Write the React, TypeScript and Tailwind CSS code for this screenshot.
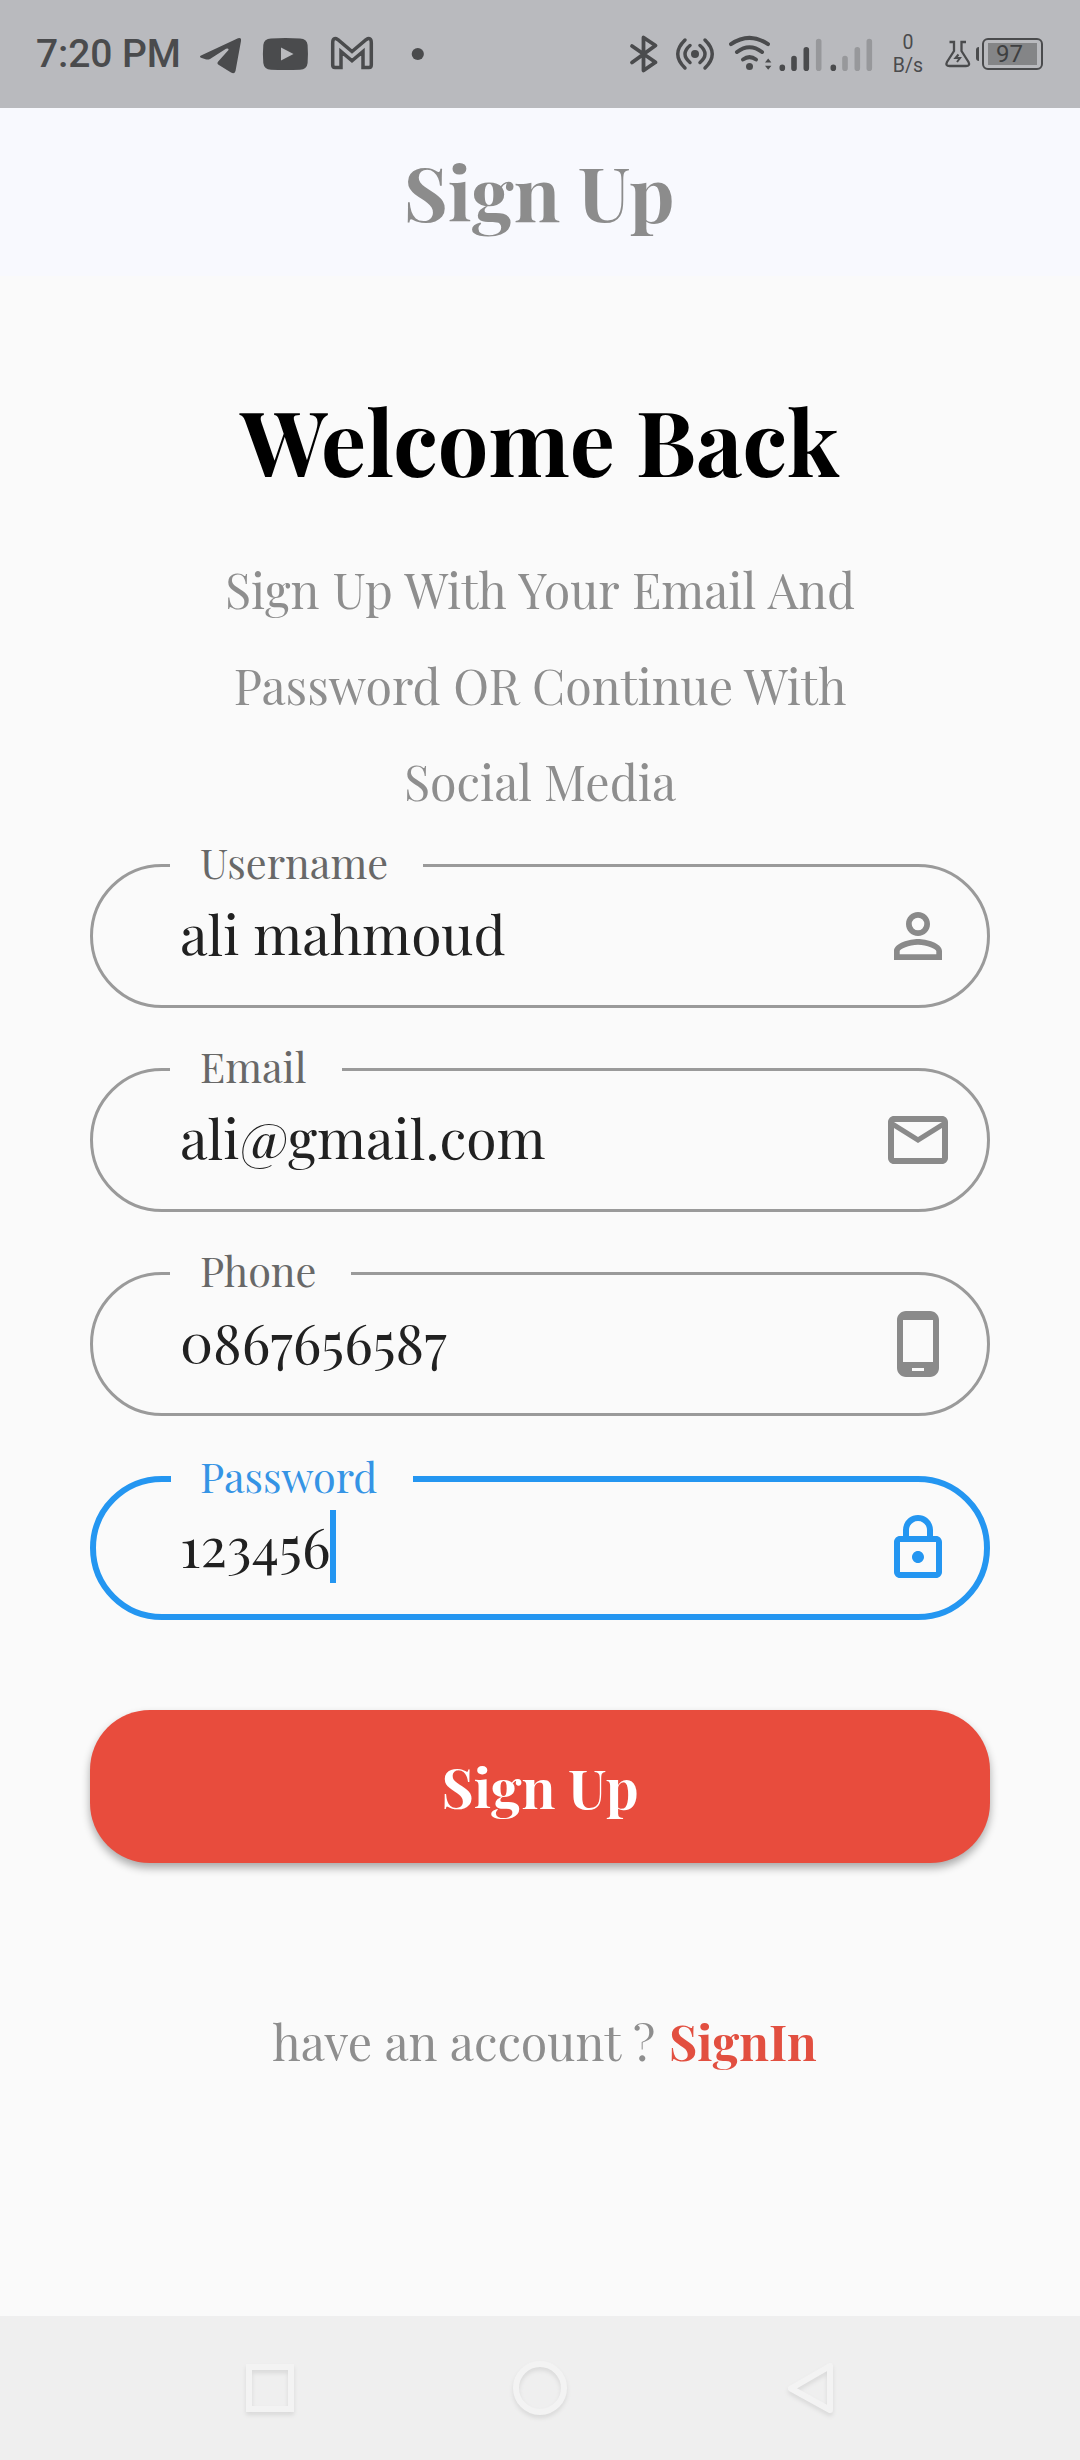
import type { ReactNode } from "react";

const SERIF = "font-['Playfair_Display','Liberation_Serif',serif]";

/* Status bar artwork: each strip is a full-height slice of the bar. */
function Strip({ x, w, className, children }: { x: number; w: number; className: string; children: ReactNode }) {
  return (
    <svg viewBox={`${x} 0 ${w} 108`} className={`h-[108px] shrink-0 ${className}`} fill="none">
      {children}
    </svg>
  );
}

const INK = "#4a4b4d";
const FAINT = "#97989b";

function StatusBar() {
  return (
    <div className="flex h-[108px] items-center bg-[#b9babe] font-[Roboto,sans-serif] text-[#4a4b4d]">
      <span className="ml-9 w-[160px] whitespace-nowrap text-[39px] leading-[110px] font-medium tracking-[-0.1px]">7:20 PM</span>
      <Strip x={196} w={54} className="w-[54px]">
        <path
          d="M201 55.5 238 38.2Q241.600 37 241 41L235.500 71Q234.500 74.500 231 72.500L218.500 64.800Q216.500 63.300 218.200 61.500L228.500 50Q229 47.700 226 48.800L210 59Q208 60 205.500 59.300L201 57.800Q199 56.700 201 55.500Z"
          fill={INK}
        />
      </Strip>
      <Strip x={250} w={70} className="w-[70px]">
        <path
          d="M271 38.500Q285.500 37.500 300 38.500Q307 38.800 307.600 45Q308.300 54 307.600 63Q307 69.300 300 69.700Q285.500 70.500 271 69.700Q264 69.300 263.300 63Q262.500 54 263.300 45Q264 38.800 271 38.500ZM281 47.500V60.500L293.500 54Z"
          fill={INK}
          fillRule="evenodd"
        />
      </Strip>
      <Strip x={320} w={80} className="w-[80px]">
        <path
          d="M335 67.500Q332.700 67.500 332.700 65V42.500Q333 36.500 338 39.700L352 51.500 366 39.700Q371 36.500 371.300 42.500V65Q371.300 67.500 369 67.500H363V51.500L352 60.800 341 51.500V67.500Z"
          stroke={INK}
          strokeWidth="3.500"
        />
      </Strip>
      <Strip x={400} w={220} className="w-[220px]">
        <circle cx="417.800" cy="54" r="6.100" fill={INK} />
      </Strip>
      <Strip x={620} w={50} className="w-[50px]">
        <path d="M632 46 655.500 62.300 643.500 70.500V37.500L655.500 45.500 632 62.500" stroke={INK} strokeWidth="3.800" strokeLinecap="round" strokeLinejoin="round" />
      </Strip>
      <Strip x={670} w={52} className="w-[52px]">
        <circle cx="695" cy="54" r="4" fill={INK} />
        <g stroke={INK} strokeWidth="3.500" strokeLinecap="round">
          <path d="M690 45.500Q680 54 690 62.500M700 45.500Q710 54 700 62.500" />
          <path d="M685 40Q670.500 54 685 68M705 40Q719.500 54 705 68" />
        </g>
      </Strip>
      <Strip x={722} w={56} className="w-[56px]">
        <g stroke={INK} strokeWidth="4" strokeLinecap="round">
          <path d="M731 44.200Q749.500 31.500 768 44.200" />
          <path d="M737 52Q749.500 42.500 762 52" />
          <path d="M743 59.500Q749.500 54.800 756 59.500" />
        </g>
        <circle cx="749.500" cy="66.500" r="3.500" fill={INK} />
        <path d="M765 62.500 768.200 58.500 771.400 62.500ZM765 65.700H771.400L768.200 69.700Z" fill={INK} />
      </Strip>
      <Strip x={778} w={110} className="w-[110px]">
        <g strokeWidth="5.600" strokeLinecap="round">
          <path d="M782.300 67.300V68.200M794 58.500V68.200M806.300 49.700V68.200M833.300 67.300V68.200" stroke={INK} />
          <path d="M818.700 41.500V68.200M845 58.500V68.200M857.300 49.700V68.200M869.300 41.500V68.200" stroke={FAINT} />
        </g>
      </Strip>
      <div className="flex w-[40px] flex-col items-center text-[19.500px] leading-[23px]">
        <span>0</span>
        <span>B/s</span>
      </div>
      <Strip x={928} w={48} className="w-[48px]">
        <path d="M949.500 42H954V51L947 62Q945 66 949.500 66H966Q970.500 66 968.500 62L961.500 51V42H966" stroke={INK} strokeWidth="2.300" />
        <path d="M958.500 54.500 955.500 58H960L957 62" stroke={INK} strokeWidth="2" />
      </Strip>
      <div className="flex items-center">
        <div className="h-[14px] w-[3px] rounded-l-sm bg-[#4a4b4d]" />
        <div className="ml-[3px] flex h-8 w-[61px] items-center rounded-[6px] border-2 border-[#4a4b4d] p-[4px]">
          <div className="flex h-[22px] w-[49px] items-center bg-[#848587] pl-[8px] text-[24px] leading-[22px] text-[#3e3f41]">97</div>
        </div>
      </div>
    </div>
  );
}

type FieldProps = {
  label: string;
  labelBox: string;
  icon: string;
  value: string;
  focused?: boolean;
};

function Field({ label, labelBox, icon, value, focused }: FieldProps) {
  return (
    <div className="relative flex h-36 items-center justify-between pr-9 pl-[90px]">
      <span
        className={`absolute inset-0 rounded-full ${focused ? "border-[6px] border-[#2496f1]" : "border-[3px] border-[#9a9a9a]"}`}
      />
      <span
        className={`absolute bg-[#fafafa] text-[41.4px] leading-[30px] whitespace-nowrap ${labelBox} ${focused ? "-top-[15px] text-[#3594e5]" : "-top-[17px] text-[#686868]"}`}
      >
        {label}
      </span>
      <div className="relative flex items-center pb-[5px] text-[55.2px] leading-[73px] whitespace-nowrap text-[#212121]">
        <span>{value}</span>
        {focused && <span className="mt-px h-[73px] w-[6px] bg-[#2496f1]" />}
      </div>
      <svg viewBox="0 0 24 24" className={`relative size-[72px] ${focused ? "fill-[#2496f1]" : "fill-[#8a8a8a]"}`}>
        <path d={icon} />
      </svg>
    </div>
  );
}

const PERSON =
  "M12 5.900a2.100 2.100 0 1 1 0 4.200 2.100 2.100 0 0 1 0-4.200m0 9c2.970 0 6.100 1.460 6.100 2.100v1.100H5.900V17c0-.640 3.130-2.100 6.100-2.100M12 4C9.790 4 8 5.790 8 8s1.790 4 4 4 4-1.790 4-4-1.790-4-4-4zm0 9c-2.670 0-8 1.340-8 4v3h16v-3c0-2.660-5.330-4-8-4z";
const MAIL =
  "M22 6c0-1.100-.9-2-2-2H4c-1.100 0-2 .9-2 2v12c0 1.100.9 2 2 2h16c1.100 0 2-.9 2-2V6zm-2 0l-8 5-8-5h16zm0 12H4V8l8 5 8-5v10z";
const PHONE =
  "M16 1H8C6.340 1 5 2.340 5 4v16c0 1.660 1.340 3 3 3h8c1.660 0 3-1.340 3-3V4c0-1.660-1.340-3-3-3zm-2 20h-4v-1h4v1zm3-3H7V4h10v14z";
const LOCK =
  "M18 8h-1V6c0-2.760-2.240-5-5-5S7 3.240 7 6v2H6c-1.100 0-2 .9-2 2v10c0 1.100.9 2 2 2h12c1.100 0 2-.9 2-2V10c0-1.100-.9-2-2-2zM9 6c0-1.660 1.340-3 3-3s3 1.340 3 3v2H9V6zm9 14H6V10h12v10zm-6-3c1.100 0 2-.9 2-2s-.9-2-2-2-2 .9-2 2 .9 2 2 2z";

function NavBar() {
  return (
    <div className="flex h-36 items-center justify-between bg-[#efefef] px-[240px]">
      <svg viewBox="0 0 60 60" className="size-[60px] fill-none stroke-[#f3f3f3] stroke-[6] drop-shadow-[0_3px_2px_rgba(0,0,0,0.09)]">
        <path d="M9 9H51V51H9Z" />
      </svg>
      <svg viewBox="0 0 60 60" className="size-[60px] fill-none stroke-[#f3f3f3] stroke-[6] drop-shadow-[0_3px_2px_rgba(0,0,0,0.09)]">
        <circle cx="30" cy="30" r="24" />
      </svg>
      <svg viewBox="0 0 60 60" className="size-[60px] fill-none stroke-[#f3f3f3] stroke-[6] drop-shadow-[0_3px_2px_rgba(0,0,0,0.09)]">
        <path d="M50 8V52L11 30.500Z" strokeLinejoin="round" />
      </svg>
    </div>
  );
}

export default function App() {
  return (
    <div className={`flex h-[2460px] w-[1080px] flex-col overflow-hidden bg-[#fafafa] ${SERIF}`}>
      <StatusBar />
      <header className="flex h-[168px] justify-center bg-[#f8f9fe] pr-[2px]">
        <h1 className="text-[75.9px] leading-[165px] font-bold text-[#8c8c8c]">Sign Up</h1>
      </header>
      <main className="flex flex-1 flex-col px-[90px] pt-[104px] text-center">
        <h2 className="text-[89.7px] leading-[120px] font-bold whitespace-nowrap text-black">Welcome Back</h2>
        <p className="mt-[41px] text-[48.3px] leading-[96px] text-[#8e8e8e]">
          <span className="block [word-spacing:1.2px]">Sign Up With Your Email And</span>
          <span className="block [word-spacing:0.6px]">Password OR Continue With</span>
          <span className="block">Social Media</span>
        </p>
        <form className="mt-[35px] flex flex-col gap-[60px] text-left">
          <Field label="Username" labelBox="left-[80px] w-[253px] pl-[30px]" icon={PERSON} value="ali mahmoud" />
          <Field label="Email" labelBox="left-[80px] w-[172px] pl-[30px]" icon={MAIL} value="ali@gmail.com" />
          <Field label="Phone" labelBox="left-[80px] w-[181px] pl-[30px]" icon={PHONE} value="0867656587" />
          <Field label="Password" labelBox="left-[81px] w-[242px] pl-[29px]" icon={LOCK} value="123456" focused />
        </form>
        <button className="mt-[90px] h-[153px] rounded-[60px] bg-[#e84c3d] text-[55.2px] font-bold text-white shadow-[0_5px_8px_rgba(0,0,0,0.32)]">
          Sign Up
        </button>
        <p className="mt-[148px] flex justify-center gap-[14px] pl-[9px] text-[48.3px] leading-[60px] whitespace-nowrap text-[#8e8e8e]">
          <span className="[word-spacing:0.4px]">have an account ?</span>
          <a className="font-bold text-[#e24f40]">SignIn</a>
        </p>
      </main>
      <NavBar />
    </div>
  );
}
